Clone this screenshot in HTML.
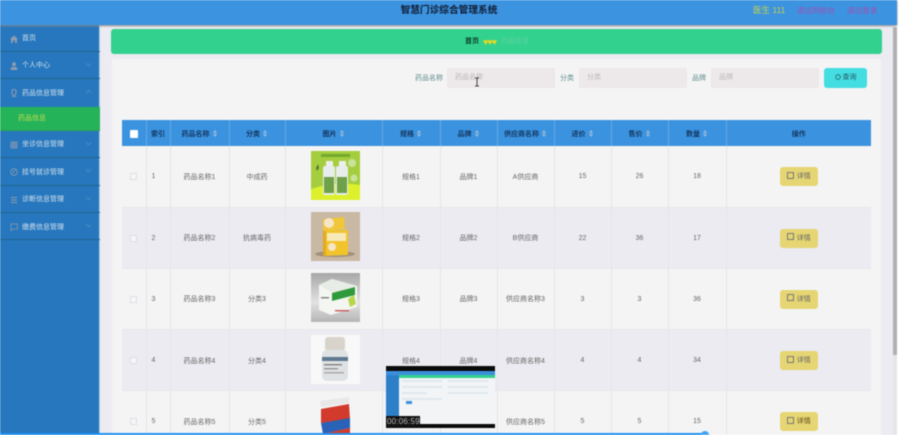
<!DOCTYPE html>
<html lang="zh"><head><meta charset="utf-8"><title>智慧门诊综合管理系统</title>
<style>
html,body{margin:0;padding:0;width:899px;height:435px;overflow:hidden;background:#fff}
*{box-sizing:border-box}
#p{position:relative;width:899px;height:435px;overflow:hidden;font-family:"Liberation Sans","Noto Sans CJK SC",sans-serif;filter:blur(.55px);background:#fff}
.a{position:absolute;white-space:nowrap;line-height:1}
#main{position:absolute;left:100px;top:25px;width:793px;height:410px;background:#ebebf1}
#hd{position:absolute;left:0;top:0;width:897px;height:25px;background:#3c93e0;box-shadow:0 1px 2px #888}
#sb{position:absolute;left:0;top:25px;width:100px;height:410px;background:#2677be;border-right:1px solid #a9cfe6}
.m{position:absolute;left:0;width:100px;border-bottom:1px solid #24648f}
.m span{position:absolute;left:22px;top:10px;font-size:7px;line-height:8px;color:#d3e0ec;white-space:nowrap}
.m svg{position:absolute;left:10px;top:10px}
.m i{position:absolute;left:86px;top:9px;width:5px;height:5px;border-right:1px solid #4d90c4;border-bottom:1px solid #4d90c4;transform:rotate(45deg) scale(.8)}
.m i.u{transform:rotate(225deg) scale(.8);top:11px}
.ip{position:absolute;top:68px;width:108px;height:20px;background:#ede8e9;border-radius:2px;font-size:7px;line-height:20px;padding-left:8px;color:#b8b8bc}
.lb{position:absolute;top:75px;font-size:7px;line-height:8px;color:#5f8c8c;white-space:nowrap}
table{position:absolute;left:122px;top:120px;width:749px;border-collapse:collapse;table-layout:fixed;font-size:7px;color:#666}
th{height:26px;background:#3b93e0;color:#13365f;font-weight:bold;text-align:center;padding:1px 0 0;border-right:1px solid #66a9e6;font-size:7px}
th:last-child,td:last-child{border-right:0}
td{text-align:center;padding:1px 0 0;border-right:1px solid #e5e5ea;height:61.2px}
tr.o td{background:#f4f4f5}
tr.e td{background:#ebebf1}
tr{border-bottom:1px solid #e8e8ec}
.s{display:inline-block;width:5px;height:7px;margin-left:3px;vertical-align:-1px;position:relative}
.s:before{content:"";position:absolute;left:0;top:0;border:2.5px solid transparent;border-top:0;border-bottom:3px solid #9dbbd8}
.s:after{content:"";position:absolute;left:0;top:4px;border:2.5px solid transparent;border-bottom:0;border-top:3px solid #9dbbd8}
.c{display:inline-block;width:7px;height:7px;border:1px solid #dfdfe4;background:#f6f6f7;vertical-align:middle}
.b{display:inline-block;width:38px;height:19px;line-height:19px;background:#e6d673;border-radius:3px;color:#666;font-size:7px;vertical-align:middle}
.b:before{content:"";display:inline-block;width:5px;height:5px;border:1px solid #777;margin-right:3px;vertical-align:-.5px}
td svg{display:block;margin:-1px 0 0 25.5px;position:relative;top:-1px}
</style></head><body><div id="p">
<div id="main"></div>
<div class="a" style="left:111px;top:29px;width:771px;height:25px;background:#32d28e;border-radius:3px"></div>
<div class="a" style="left:112px;top:59px;width:769px;height:376px;background:#f4f4f5"></div>
<div class="a" style="left:465px;top:38px;font-size:7px;line-height:8px;color:#0c3b2a;font-weight:bold">首页</div>
<div class="a" style="left:483px;top:37px;font-size:9px;line-height:10px;color:#e8d820;letter-spacing:-1px">♥♥♥</div>
<div class="a" style="left:501px;top:38px;font-size:7px;line-height:8px;color:#62cfa4">药品信息</div>

<div class="lb" style="left:415px">药品名称</div>
<div class="ip" style="left:447px">药品名称</div>
<div class="lb" style="left:560px">分类</div>
<div class="ip" style="left:579px">分类</div>
<div class="lb" style="left:692px">品牌</div>
<div class="ip" style="left:711px">品牌</div>
<div class="a" style="left:824px;top:68px;width:43px;height:20px;background:#44dde2;border-radius:3px;font-size:7px;line-height:20px;color:#245a63;text-align:center">
<svg width="6" height="6" viewBox="0 0 6 6" style="vertical-align:-.5px;margin-right:2px"><circle cx="3" cy="3" r="2.3" fill="none" stroke="#245a63" stroke-width=".8"/></svg>查询</div>
<svg class="a" style="left:474px;top:77px" width="6" height="10" viewBox="0 0 6 10"><path d="M1 1h4M3 1v8M1 9h4" stroke="#444" stroke-width="1" fill="none"/></svg>

<table>
<colgroup><col style="width:24px"><col style="width:24px"><col style="width:59px"><col style="width:56px"><col style="width:97px"><col style="width:58px"><col style="width:57px"><col style="width:57px"><col style="width:57px"><col style="width:57px"><col style="width:58px"><col style="width:145px"></colgroup>
<tr style="border:0"><th><span style="display:inline-block;width:8px;height:8px;background:#fff;border-radius:1px;vertical-align:middle"></span></th><th>索引</th><th>药品名称<span class="s"></span></th><th>分类<span class="s"></span></th><th>图片<span class="s"></span></th><th>规格<span class="s"></span></th><th>品牌<span class="s"></span></th><th>供应商名称<span class="s"></span></th><th>进价<span class="s"></span></th><th>售价<span class="s"></span></th><th>数量<span class="s"></span></th><th>操作</th></tr>
<tr class="o"><td><span class="c"></span></td><td style="text-align:left;padding-left:5px">1</td><td>药品名称1</td><td>中成药</td><td>
<svg width="49" height="49" viewBox="0 0 49 49"><rect width="49" height="49" fill="#a5ce3e"/><path d="M0 38Q25 30 49 34V49H0Z" fill="#dcf02c"/><rect x="10" y="3" width="29" height="3" fill="#5f9a2a" opacity=".7"/><rect x="15" y="10" width="7" height="5" fill="#eee"/><rect x="28" y="10" width="7" height="5" fill="#eee"/><rect x="12" y="15" width="12" height="29" rx="2" fill="#e7ecec"/><rect x="25" y="15" width="12" height="29" rx="2" fill="#e7ecec"/><rect x="13" y="26" width="10" height="16" fill="#6fa04a"/><rect x="26" y="26" width="10" height="16" fill="#6fa04a"/><circle cx="41" cy="12" r="4" fill="#c9e39a"/><circle cx="43" cy="27" r="3.5" fill="#c9e39a"/><path d="M5 17l2-4 1 4-2 3z" fill="#4c7a2c"/></svg></td><td>规格1</td><td>品牌1</td><td>A供应商</td><td>15</td><td>26</td><td>18</td><td><span class="b">详情</span></td></tr>
<tr class="e"><td><span class="c"></span></td><td style="text-align:left;padding-left:5px">2</td><td>药品名称2</td><td>抗病毒药</td><td>
<svg width="49" height="49" viewBox="0 0 49 49"><rect width="49" height="49" fill="#c9b8a3"/><ellipse cx="24" cy="42" rx="20" ry="3" fill="#9f8f7c"/><path d="M12 7l21-2 1 12-22 3z" fill="#f0c73a"/><circle cx="18" cy="11" r="5" fill="#f6e6c8"/><path d="M12 19l25-1v25l-25 1z" fill="#f2c42c"/><rect x="16" y="21" width="19" height="8" fill="#f7e9b8"/><circle cx="21" cy="35" r="4" fill="#f6e6c8"/><rect x="12" y="19" width="3" height="25" fill="#e2aa20"/></svg></td><td>规格2</td><td>品牌2</td><td>B供应商</td><td>22</td><td>36</td><td>17</td><td><span class="b">详情</span></td></tr>
<tr class="o"><td><span class="c"></span></td><td style="text-align:left;padding-left:5px">3</td><td>药品名称3</td><td>分类3</td><td>
<svg width="49" height="49" viewBox="0 0 49 49"><defs><linearGradient id="g" x1="0" y1="0" x2="0" y2="1"><stop offset="0" stop-color="#a8a8a8"/><stop offset=".6" stop-color="#e2e2e2"/><stop offset="1" stop-color="#b5b5b5"/></linearGradient></defs><rect width="49" height="49" fill="url(#g)"/><path d="M8 12L21 6 46 13 46 34 20 42 8 37Z" fill="#f4f6f2"/><path d="M8 12L21 6 46 13 22 20Z" fill="#e8ece6"/><path d="M21 20L44 14V22L21 28Z" fill="#2f9a3c"/><path d="M37 26l6-4 2 9-6 3z" fill="#b8d64c"/><rect x="10" y="24" width="8" height="1.5" fill="#888"/><rect x="24" y="37" width="14" height="1.5" fill="#c86060"/></svg></td><td>规格3</td><td>品牌3</td><td>供应商名称3</td><td>3</td><td>3</td><td>36</td><td><span class="b">详情</span></td></tr>
<tr class="e"><td><span class="c"></span></td><td style="text-align:left;padding-left:5px">4</td><td>药品名称4</td><td>分类4</td><td>
<svg width="49" height="49" viewBox="0 0 49 49"><rect width="49" height="49" fill="#f8f8f8"/><rect x="14" y="2" width="20" height="14" rx="3" fill="#d8d4cc"/><rect x="11" y="15" width="26" height="31" rx="5" fill="#dfe2e4"/><rect x="11" y="22" width="26" height="4" fill="#5d7890"/><rect x="13" y="29" width="18" height="1.5" fill="#888"/><rect x="13" y="33" width="14" height="1.5" fill="#999"/><rect x="13" y="37" width="20" height="1.5" fill="#aaa"/></svg></td><td>规格4</td><td>品牌4</td><td>供应商名称4</td><td>4</td><td>4</td><td>34</td><td><span class="b">详情</span></td></tr>
<tr class="o"><td><span class="c"></span></td><td style="text-align:left;padding-left:5px">5</td><td>药品名称5</td><td>分类5</td><td>
<svg width="49" height="49" viewBox="0 0 49 49"><rect width="49" height="49" fill="#f4f4f5"/><path d="M9 5L38 1 39 40 12 48Z" fill="#f4f4f4"/><path d="M9 5L38 1 38 7 10 11Z" fill="#e8e8e8"/><path d="M10 13L38 8 39 23 10 27Z" fill="#d23a2c"/><path d="M10 27L39 22 39 32 12 38Z" fill="#2a62b8"/><path d="M11 38L39 32 39 40 12 48Z" fill="#d23a2c"/></svg></td><td>规格5</td><td>品牌5</td><td>供应商名称5</td><td>5</td><td>5</td><td>15</td><td><span class="b" style="color:#5a4a18">详情</span></td></tr>
</table>

<div id="sb">
<div class="m" style="top:0;height:27px"><svg width="8" height="8" viewBox="0 0 8 8"><path d="M0 4L4 .5 8 4H7V8H5V5.5H3V8H1V4Z" fill="#8f9bb0"/></svg><span>首页</span></div>
<div class="m" style="top:27px;height:27px"><svg width="8" height="8" viewBox="0 0 8 8"><circle cx="4" cy="2.3" r="2" fill="#8f9bb0"/><path d="M.8 8V6.3Q.8 5 2.5 5H5.5Q7.2 5 7.2 6.3V8Z" fill="#8f9bb0"/></svg><span>个人中心</span><i></i></div>
<div class="m" style="top:54px;height:28px;border:0"><svg width="8" height="8" viewBox="0 0 8 8"><rect x="2" y=".5" width="4" height="5.5" rx="1.5" fill="none" stroke="#8f9bb0"/><path d="M2 7.5H6" stroke="#8f9bb0"/></svg><span style="top:11px">药品信息管理</span><i class="u"></i></div>
<div class="a" style="left:0;top:82px;width:100px;height:24px;background:#25b35a;border-bottom:1px solid #2fa04e"><span style="position:absolute;left:18px;top:8px;font-size:7px;line-height:8px;color:#c6dc4a">药品信息</span></div>
<div class="m" style="top:106px;height:27px"><svg width="8" height="8" viewBox="0 0 8 8"><path d="M1 1H7V7H1ZM1 3H7M1 5H7M3 1V7M5 1V7" stroke="#8f9bb0" stroke-width=".8" fill="none"/></svg><span>坐诊信息管理</span><i></i></div>
<div class="m" style="top:133px;height:28px"><svg width="8" height="8" viewBox="0 0 8 8"><circle cx="4" cy="4" r="3.3" fill="none" stroke="#8f9bb0" stroke-width=".8"/><path d="M5.5 2.5L3.5 3.5 3 5.5" stroke="#8f9bb0" stroke-width=".8" fill="none"/></svg><span style="top:11px">挂号就诊管理</span><i></i></div>
<div class="m" style="top:161px;height:27px"><svg width="8" height="8" viewBox="0 0 8 8"><path d="M1 1.5H7M1 4H7M1 6.5H7" stroke="#8f9bb0" fill="none"/></svg><span>诊断信息管理</span><i></i></div>
<div class="m" style="top:188px;height:27px"><svg width="8" height="8" viewBox="0 0 8 8"><path d="M.5 1H7.5V6H2.5L1 7.5V1Z" stroke="#8f9bb0" stroke-width=".7" fill="none"/></svg><span style="top:11px">缴费信息管理</span><i></i></div>
</div>

<div id="hd"></div>
<div class="a" style="left:349px;top:5px;width:200px;text-align:center;font-size:9.7px;line-height:12px;font-weight:bold;color:#101c33">智慧门诊综合管理系统</div>
<div class="a" style="left:753px;top:6px;font-size:8.5px;line-height:9px;color:#c6d04e">医生 111</div>
<div class="a" style="left:797px;top:6px;font-size:7.6px;line-height:9px;color:#a24fb4">退出到前台</div>
<div class="a" style="left:847px;top:6px;font-size:7.6px;line-height:9px;color:#a24fb4">退出登录</div>

<div class="a" style="left:893px;top:27px;width:4px;height:328px;background:#b0b0b3"></div>
<div class="a" style="left:893px;top:355px;width:4px;height:80px;background:#e6e6e8"></div>

<div class="a" style="left:386px;top:366px;width:109px;height:62px;background:#0b0b0b">
<div class="a" style="left:0;top:5px;width:109px;height:53px;background:#f2f4f6"></div>
<div class="a" style="left:0;top:5px;width:109px;height:4px;background:#3b8fdc"></div>
<div class="a" style="left:13px;top:9px;width:96px;height:3px;background:#32d28e"></div>
<div class="a" style="left:0;top:9px;width:13px;height:49px;background:#2d80c8"></div>
<div class="a" style="left:16px;top:14px;width:40px;height:2px;background:#dfe8ee"></div><div class="a" style="left:62px;top:14px;width:40px;height:2px;background:#dfe8ee"></div>
<div class="a" style="left:16px;top:20px;width:40px;height:2px;background:#dfe8ee"></div><div class="a" style="left:62px;top:20px;width:40px;height:2px;background:#dfe8ee"></div>
<div class="a" style="left:16px;top:26px;width:25px;height:2px;background:#dfe8ee"></div><div class="a" style="left:62px;top:26px;width:40px;height:2px;background:#dfe8ee"></div>
<div class="a" style="left:16px;top:32px;width:40px;height:2px;background:#dfe8ee"></div>
<div class="a" style="left:20px;top:35px;width:6px;height:3px;background:#3b8fdc"></div>
<div class="a" style="left:0;top:50px;width:34px;height:12px;background:#111;color:#bdbdbd;font-size:8px;line-height:12px;padding-left:1px;letter-spacing:.2px">00:06:59</div>
</div>

<div class="a" style="left:0;top:433px;width:705px;height:2px;background:#1e90f0"></div>
<div class="a" style="left:701px;top:431px;width:8px;height:8px;border-radius:50%;background:#3ea2f5"></div>
</div></body></html>
